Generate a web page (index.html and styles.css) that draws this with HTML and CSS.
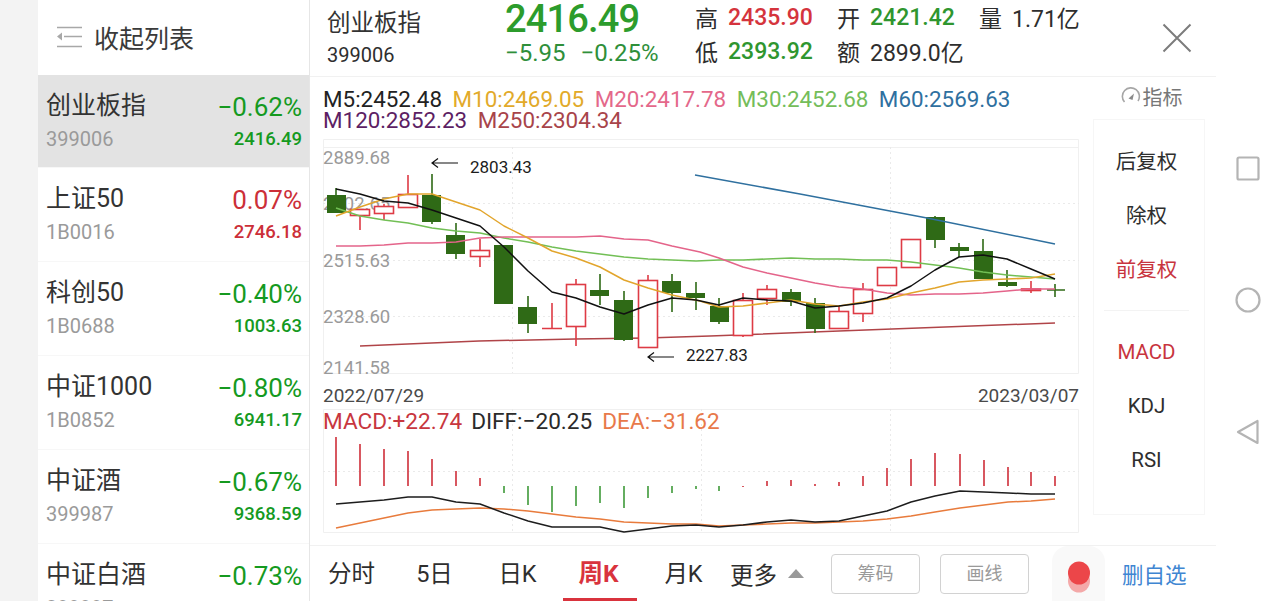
FILE: index.html
```html
<!DOCTYPE html>
<html lang="zh-CN">
<head>
    <meta charset="UTF-8">
    <meta name="viewport" content="width=device-width, initial-scale=1.0">
    <title>创业板指</title>
    <link rel="stylesheet" href="styles.css">
</head>
<body>
    <div class="strip"></div>

    <aside class="sidebar">
        <div class="side-head">
            <svg class="collapse-icon" width="26" height="22" viewBox="0 0 26 22">
                <path d="M1 1.5H26M8 10.5H26M1 20.5H26" fill="none" stroke="#a8a8a8" stroke-width="1.6"/>
                <path d="M1 10.5L6 6.5V14.5Z" fill="#a8a8a8"/>
            </svg>
            <span>收起列表</span>
        </div>
        <div class="row active">
            <div class="row-top"><span class="name">创业板指</span><span class="pct down">−0.62%</span></div>
            <div class="row-bot"><span class="code">399006</span><span class="val down">2416.49</span></div>
        </div>
        <div class="row">
            <div class="row-top"><span class="name">上证50</span><span class="pct up">0.07%</span></div>
            <div class="row-bot"><span class="code">1B0016</span><span class="val up">2746.18</span></div>
        </div>
        <div class="row">
            <div class="row-top"><span class="name">科创50</span><span class="pct down">−0.40%</span></div>
            <div class="row-bot"><span class="code">1B0688</span><span class="val down">1003.63</span></div>
        </div>
        <div class="row">
            <div class="row-top"><span class="name">中证1000</span><span class="pct down">−0.80%</span></div>
            <div class="row-bot"><span class="code">1B0852</span><span class="val down">6941.17</span></div>
        </div>
        <div class="row">
            <div class="row-top"><span class="name">中证酒</span><span class="pct down">−0.67%</span></div>
            <div class="row-bot"><span class="code">399987</span><span class="val down">9368.59</span></div>
        </div>
        <div class="row">
            <div class="row-top"><span class="name">中证白酒</span><span class="pct down">−0.73%</span></div>
            <div class="row-bot"><span class="code">399997</span><span class="val down">11147.51</span></div>
        </div>
    </aside>

    <main class="main">
        <header class="quote">
            <div class="quote-name">
                <div class="title">创业板指</div>
                <div class="subcode">399006</div>
            </div>
            <div class="quote-price">
                <div class="price">2416.49</div>
                <div class="change"><span>−5.95</span><span>−0.25%</span></div>
            </div>
            <div class="stats">
                <div class="stat"><span>高</span><b class="hi">2435.90</b></div>
                <div class="stat"><span>开</span><b class="lo">2421.42</b></div>
                <div class="stat"><span>量</span><b>1.71亿</b></div>
                <div class="stat"><span>低</span><b class="lo">2393.92</b></div>
                <div class="stat"><span>额</span><b>2899.0亿</b></div>
            </div>
            <svg class="close" width="30" height="30" viewBox="0 0 30 30">
                <path d="M1.5 1.5L28.5 28.5M28.5 1.5L1.5 28.5" stroke="#7c7c7c" stroke-width="2" fill="none"/>
            </svg>
        </header>

        <div class="content">
            <section class="charts">
                <div class="legend">
                    <span class="m5">M5:2452.48</span>
                    <span class="m10">M10:2469.05</span>
                    <span class="m20">M20:2417.78</span>
                    <span class="m30">M30:2452.68</span>
                    <span class="m60">M60:2569.63</span><br>
                    <span class="m120">M120:2852.23</span>
                    <span class="m250">M250:2304.34</span>
                </div>

                <svg class="plot kline" width="757" height="235" viewBox="323 139 757 235">
                    <path class="frame" d="M323.5 139.5H1078.5V373.5H323.5Z M323.5 147.5H1078.5"/>
                    <path class="dots" d="M323 203.5H1079M323 260.5H1079M323 316.5H1079M512.5 147V373M890.5 147V373"/>
                    <text class="axis" x="323" y="164">2889.68</text>
                    <text class="axis" x="323" y="210">2702.65</text>
                    <text class="axis" x="323" y="267">2515.63</text>
                    <text class="axis" x="323" y="323">2328.60</text>
                    <text class="axis" x="323" y="374">2141.58</text>

                    <path class="ln-m250" d="M360 346L479 341L575 339L647 338L710 336L839 331L1055 323"/>

                    <path class="wick-g" d="M336 188V213M432 174V224M456 223V259M528 296V333M600 274V305M624 291V341M672 274V312M696 282V310M719 298V324M791 289V306M815 298V333M935 216V248M959 243V257M983 239V279M1007 270V287M1055 284V297M1047 290H1065"/>
                    <g class="body-g">
                        <rect x="327" y="195" width="19" height="18"/>
                        <rect x="422" y="195" width="19" height="27"/>
                        <rect x="446" y="235" width="19" height="19"/>
                        <rect x="494" y="245" width="19" height="59"/>
                        <rect x="518" y="307" width="19" height="17"/>
                        <rect x="590" y="290" width="19" height="6"/>
                        <rect x="614" y="300" width="19" height="40"/>
                        <rect x="662" y="281" width="19" height="12"/>
                        <rect x="686" y="293" width="19" height="5"/>
                        <rect x="710" y="306" width="19" height="16"/>
                        <rect x="782" y="292" width="19" height="10"/>
                        <rect x="806" y="303" width="19" height="26"/>
                        <rect x="926" y="217" width="19" height="23"/>
                        <rect x="950" y="247" width="19" height="4"/>
                        <rect x="974" y="251" width="19" height="28"/>
                        <rect x="998" y="282" width="19" height="4"/>
                    </g>
                    <path class="wick-r" d="M360 215V230M384 204V206M384 213V220M408 175V194M480 239V250M480 256V267M552 303V329M542 328.5H562M576 279V284M576 326V346M648 275V280M743 293V300M743 335V337M767 285V289M767 298V305M839 305V311M863 283V289M863 313V322M887 285V286M1031 281V293"/>
                    <g class="body-r">
                        <rect x="350.5" y="209.5" width="19" height="6"/>
                        <rect x="374.5" y="206.5" width="19" height="7"/>
                        <rect x="398.5" y="194.5" width="19" height="13"/>
                        <rect x="470.5" y="250.5" width="19" height="6"/>
                        <rect x="566.5" y="284.5" width="19" height="42"/>
                        <rect x="638.5" y="280.5" width="19" height="67"/>
                        <rect x="733.5" y="300.5" width="19" height="35"/>
                        <rect x="757.5" y="289.5" width="19" height="9"/>
                        <rect x="829.5" y="311.5" width="19" height="17"/>
                        <rect x="853.5" y="289.5" width="19" height="24"/>
                        <rect x="877.5" y="267.5" width="19" height="18"/>
                        <rect x="901.5" y="239.5" width="19" height="28"/>
                        <rect x="1021.5" y="289" width="19" height="1.5"/>
                    </g>

                    <path class="ln-m60" d="M695 175L800 194L927 218L1055 244"/>
                    <path class="ln-m30" d="M336 208L360 216L384 220L408 223L432 228L456 231L480 233L504 238L528 242L552 247L576 251L600 254L624 257L648 259L672 260L696 261L719 260L743 260L767 259L791 258L815 259L839 259L863 260L887 260L911 262L935 265L959 268L983 272L1007 275L1031 277L1055 279"/>
                    <path class="ln-m20" d="M336 246L360 246L384 245L408 243L432 243L456 242L480 238L504 237L528 237L552 237L576 237L600 236L624 239L648 240L672 246L700 252L719 258L743 267L767 273L791 278L815 283L839 287L863 289L887 293L911 295L935 294L959 294L983 293L1007 291L1031 289L1055 289"/>
                    <path class="ln-m10" d="M336 216L360 207L384 199L408 194L432 194L456 202L480 210L504 226L528 238L552 251L576 258L600 267L624 280L648 288L672 295L700 301L719 307L743 306L767 303L791 300L815 304L839 306L863 302L887 299L911 293L935 288L959 282L983 280L1007 279L1031 278L1055 274"/>
                    <path class="ln-m5" d="M336 189L360 194L384 201L408 203L432 210L456 218L480 226L504 247L528 271L552 292L576 298L600 307L624 314L648 305L672 298L696 300L719 305L743 298L767 300L791 301L815 308L839 306L863 303L887 298L911 286L935 270L959 257L983 255L1007 259L1031 269L1055 279"/>

                    <path class="mark" d="M432 163H458M438 158.5L432 163L438 167.5"/>
                    <text class="note" x="470" y="173">2803.43</text>
                    <path class="mark" d="M648 357H674M654 352.5L648 357L654 361.5"/>
                    <text class="note" x="686" y="361">2227.83</text>
                </svg>

                <div class="dates"><span>2022/07/29</span><span>2023/03/07</span></div>

                <svg class="plot macd" width="757" height="125" viewBox="323 409 757 125">
                    <path class="frame" d="M323.5 409.5H1078.5V532.5H323.5Z"/>
                    <path class="dots" d="M323 471.5H1079M512.5 409V533M701.5 409V533M890.5 409V533"/>
                    <text class="macd-legend" x="323" y="429"><tspan class="c-macd">MACD:+22.74</tspan><tspan class="c-diff" dx="9">DIFF:−20.25</tspan><tspan class="c-dea" dx="10">DEA:−31.62</tspan></text>
                    <path class="bar-r" d="M336 486V437M360 486V444M384 486V449M408 486V451M432 486V459M456 486V471M480 486V478M743 486V487M767 486V481M791 486V480M815 486V484M839 486V482M863 486V476M887 486V468M911 486V459M935 486V453M960 486V454M984 486V460M1008 486V467M1031 486V472M1055 486V476"/>
                    <path class="bar-g" d="M504 486V493M528 486V505M552 486V512M576 486V506M600 486V503M624 486V508M648 486V498M672 486V493M696 486V489M719 486V491"/>
                    <path class="ln-dea" d="M336 528L360 523L384 518L408 513L432 510L456 509L480 508L504 509L528 511L552 514L576 517L600 519L624 522L648 523L672 524L696 524L719 526L743 525L767 524L791 523L815 523L839 522L863 521L887 519L911 516L935 512L960 508L984 505L1008 502L1031 501L1055 499"/>
                    <path class="ln-diff" d="M336 504L360 502L384 500L408 497L432 497L456 502L480 504L504 513L528 521L552 527L576 527L600 527L624 532L648 529L672 526L696 525L719 527L743 525L767 522L791 520L815 522L839 521L863 516L887 511L911 502L935 496L960 491L984 492L1008 493L1031 494L1055 494"/>
                </svg>
            </section>

            <section class="tools">
                <div class="tools-head">
                    <svg width="20" height="18" viewBox="0 0 20 18">
                        <path d="M3.5 15A8.5 8.5 0 1 1 17 14" fill="none" stroke="#a6a6a6" stroke-width="1.6"/>
                        <path d="M7.5 11.5L13 6.5L11.5 13Z" fill="#8a8a8a"/>
                    </svg>
                    <span>指标</span>
                </div>
                <div class="menu">
                    <div class="menu-item">后复权</div>
                    <div class="menu-item">除权</div>
                    <div class="menu-item on">前复权</div>
                    <div class="menu-line"></div>
                    <div class="menu-item on">MACD</div>
                    <div class="menu-item">KDJ</div>
                    <div class="menu-item">RSI</div>
                </div>
            </section>
        </div>

        <footer class="tabs">
            <div class="tab">分时</div>
            <div class="tab">5日</div>
            <div class="tab">日K</div>
            <div class="tab on">周K</div>
            <div class="tab">月K</div>
            <div class="more"><span>更多</span><i class="caret"></i></div>
            <div class="btn first">筹码</div>
            <div class="btn">画线</div>
            <div class="rec">
                <svg width="24" height="32" viewBox="0 0 24 32">
                    <ellipse cx="12" cy="20" rx="11" ry="11.5" fill="#f4a9a9"/>
                    <ellipse cx="12" cy="12" rx="11" ry="11.5" fill="#ec4649"/>
                </svg>
            </div>
            <div class="watch">删自选</div>
        </footer>
    </main>

    <nav class="sysnav">
        <svg width="24" height="25" viewBox="0 0 24 25"><rect x="1.5" y="1.5" width="21" height="22" rx="1.5" fill="none" stroke="#b4b4b4" stroke-width="2.2"/></svg>
        <svg width="26" height="26" viewBox="0 0 26 26"><circle cx="13" cy="13" r="11.5" fill="none" stroke="#b4b4b4" stroke-width="2.2"/></svg>
        <svg width="24" height="26" viewBox="0 0 24 26"><path d="M21.5 2V24L2 13Z" fill="none" stroke="#b4b4b4" stroke-width="2.2" stroke-linejoin="round"/></svg>
    </nav>
</body>
</html>
```

FILE: styles.css
```css
* {
    box-sizing: border-box;
}
html, body {
    margin: 0;
    height: 601px;
    overflow: hidden;
}
body {
    display: flex;
    background: #fff;
    color: #2e2e2e;
    font-family: Roboto, "Noto Sans CJK SC", sans-serif;
}
.strip {
    width: 38px;
    background: #f3f3f3;
}

/* left list */
.sidebar {
    width: 272px;
    height: 601px;
    overflow: hidden;
    border-right: 1px solid #e6e6e6;
}
.side-head {
    display: flex;
    align-items: center;
    height: 75px;
    padding: 0 0 2px 18px;
    font-size: 25px;
    color: #3a3a3a;
}
.collapse-icon {
    margin-right: 12px;
}
.row {
    height: 94px;
    padding: 13px 7px 0 8px;
    border-bottom: 1px solid #f7f7f7;
}
.row.active {
    height: 93px;
    background: #e3e3e3;
}
.row-top, .row-bot {
    display: flex;
    justify-content: space-between;
    align-items: center;
}
.row-top {
    height: 34px;
}
.row-bot {
    height: 30px;
    margin-top: 2px;
}
.name {
    font-size: 25px;
    color: #333;
    padding-bottom: 4px;
}
.pct {
    font-size: 26px;
    padding-top: 3px;
}
.code {
    font-size: 20px;
    color: #9a9a9a;
}
.val {
    font-size: 18.5px;
    font-weight: 500;
}
.up {
    color: #cc2f38;
}
.down {
    color: #159a1f;
}

/* main column */
.main {
    width: 906px;
    display: flex;
    flex-direction: column;
}
.quote {
    display: flex;
    height: 77px;
    border-bottom: 1px solid #f1f1f1;
    position: relative;
}
.quote-name {
    width: 195px;
    padding: 6px 0 0 17px;
}
.title {
    font-size: 23.5px;
    line-height: 34px;
    color: #333;
}
.subcode {
    font-size: 20px;
    line-height: 26px;
    margin-top: 2px;
}
.quote-price {
    width: 190px;
}
.price {
    font-size: 38px;
    font-weight: 500;
    line-height: 38px;
    letter-spacing: -0.85px;
    color: #2c9c2c;
}
.change {
    display: flex;
    gap: 15px;
    font-size: 24px;
    line-height: 28px;
    margin-top: 1px;
    color: #2f8f3a;
}
.stats {
    display: grid;
    grid-template-columns: 142px 142px auto;
    grid-auto-rows: 34px;
}
.stat {
    display: flex;
    align-items: center;
    gap: 10px;
    font-size: 23px;
    white-space: nowrap;
}
.stat b {
    font-weight: 400;
}
.stat b.hi, .stat b.lo {
    font-weight: 500;
}
.hi {
    color: #d5343d;
}
.lo {
    color: #2f962f;
}
.close {
    position: absolute;
    left: 852px;
    top: 23px;
}

.content {
    display: flex;
    height: 469px;
    border-bottom: 1px solid #f1f1f1;
}
.charts {
    width: 770px;
    padding-left: 13px;
}
.legend {
    height: 62px;
    padding-top: 12px;
    font-size: 22.4px;
    line-height: 21px;
    white-space: nowrap;
}
.legend span {
    margin-right: 5px;
}
.m5 { color: #222; }
.m10 { color: #e2aa2a; }
.m20 { color: #e4688a; }
.m30 { color: #74bd5a; }
.m60 { color: #2f709f; }
.m120 { color: #5d1f64; }
.m250 { color: #a8444a; }

.plot {
    display: block;
}
.frame {
    fill: none;
    stroke: #f0f0f0;
}
.dots {
    fill: none;
    stroke: #eaeaea;
    stroke-dasharray: 2 3;
}
.axis {
    font-size: 18.5px;
    fill: #9a9a9a;
}
.note {
    font-size: 17px;
    fill: #1c1c1c;
}
.mark {
    fill: none;
    stroke: #111;
    stroke-width: 1.2;
}
.wick-g {
    fill: none;
    stroke: #2f6a16;
    stroke-width: 1.6;
}
.body-g {
    fill: #2f6a16;
}
.wick-r {
    fill: none;
    stroke: #de3b45;
    stroke-width: 1.6;
}
.body-r {
    fill: #fff;
    stroke: #de3b45;
    stroke-width: 1.6;
}
.ln-m5, .ln-m10, .ln-m20, .ln-m30, .ln-m60, .ln-m250, .ln-diff, .ln-dea {
    fill: none;
    stroke-width: 1.5;
    stroke-linejoin: round;
}
.ln-m5 { stroke: #111; }
.ln-m10 { stroke: #e2a52c; }
.ln-m20 { stroke: #e4648a; }
.ln-m30 { stroke: #72bf55; }
.ln-m60 { stroke: #2f709f; }
.ln-m250 { stroke: #b04448; }
.ln-diff { stroke: #1d1d1d; }
.ln-dea { stroke: #e87b3c; }

.dates {
    display: flex;
    justify-content: space-between;
    width: 756px;
    height: 35px;
    padding-top: 11px;
    font-size: 19px;
    line-height: 22px;
    color: #4a4a4a;
}
.macd-legend {
    font-size: 22.6px;
}
.c-macd { fill: #c8373f; }
.c-diff { fill: #2b2b2b; }
.c-dea { fill: #e8794a; }
.bar-r {
    fill: none;
    stroke: #cf2f3a;
    stroke-width: 1.6;
}
.bar-g {
    fill: none;
    stroke: #3f9a3a;
    stroke-width: 1.6;
}

/* right tools */
.tools {
    width: 136px;
    padding-left: 13px;
}
.tools-head {
    display: flex;
    align-items: center;
    justify-content: center;
    gap: 2px;
    width: 111px;
    height: 38px;
    margin-bottom: 4px;
    padding-left: 6px;
    font-size: 20px;
    color: #777;
}
.menu {
    width: 112px;
    height: 396px;
    padding: 15px 5px 0 0;
    border: 1px solid #f6f6f6;
}
.menu-item {
    height: 54px;
    line-height: 54px;
    text-align: center;
    font-size: 20.5px;
    color: #2e2e2e;
}
.menu-item.on {
    color: #c8343e;
}
.menu-line {
    height: 1px;
    margin: 13px 10px 14px;
    background: #f3f3f3;
}

/* bottom tabs */
.tabs {
    display: flex;
    align-items: center;
    flex: 1;
}
.tab {
    position: relative;
    width: 83px;
    height: 100%;
    padding-top: 9px;
    line-height: 38px;
    text-align: center;
    font-size: 23.5px;
}
.tab.on {
    color: #d9333d;
    font-size: 24.5px;
    font-weight: 700;
    padding-right: 4px;
}
.tab.on::after {
    content: "";
    position: absolute;
    left: 4px;
    right: 5px;
    bottom: 0;
    height: 3px;
    background: #d9333d;
}
.more {
    display: flex;
    align-items: center;
    gap: 11px;
    width: 101px;
    margin-left: 5px;
    font-size: 23.5px;
}
.caret {
    width: 0;
    height: 0;
    border-left: 8px solid transparent;
    border-right: 8px solid transparent;
    border-bottom: 9px solid #999;
}
.btn {
    width: 89px;
    height: 40px;
    margin-left: 20px;
    border: 1px solid #d2d2d2;
    border-radius: 4px;
    line-height: 38px;
    text-align: center;
    font-size: 18px;
    color: #9a9a9a;
}
.btn.first {
    margin-left: 0;
}
.rec {
    display: flex;
    justify-content: center;
    width: 53px;
    height: 55px;
    margin-left: 23px;
    padding-top: 15px;
    background: #f9f9f9;
    border-radius: 16px 16px 0 0;
}
.watch {
    margin-left: 17px;
    font-size: 21.5px;
    color: #3f86d2;
}

/* system nav */
.sysnav {
    width: 64px;
    display: flex;
    flex-direction: column;
    align-items: center;
    justify-content: center;
    gap: 106px;
}
```
